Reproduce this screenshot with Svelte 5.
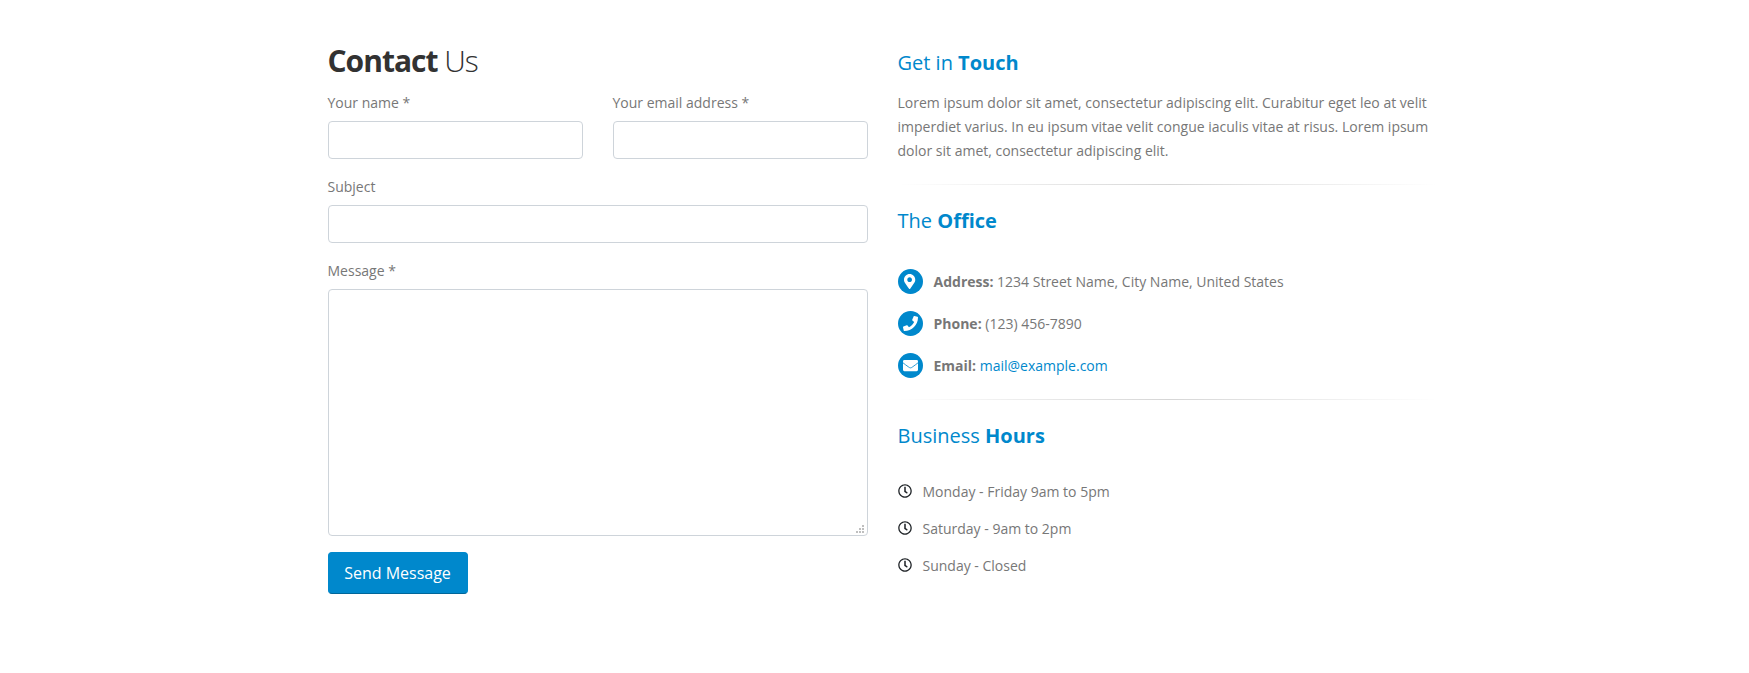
<script>
  const contacts = [
    { icon: 'pin', label: 'Address:', text: '1234 Street Name, City Name, United States' },
    { icon: 'phone', label: 'Phone:', text: '(123) 456-7890' },
    { icon: 'mail', label: 'Email:', text: 'mail@example.com', href: 'mailto:mail@example.com' }
  ];
  const icons = {
    pin: { box: '0 0 384 512', d: 'M172.268 501.67C26.97 291.031 0 269.413 0 192 0 85.961 85.961 0 192 0s192 85.961 192 192c0 77.413-26.97 99.031-172.268 309.67-9.535 13.774-29.93 13.773-39.464 0zM192 272c44.183 0 80-35.817 80-80s-35.817-80-80-80-80 35.817-80 80 35.817 80 80 80z' },
    phone: { box: '0 0 512 512', d: 'M493.4 24.6l-104-24c-11.3-2.6-22.9 3.3-27.5 13.9l-48 112c-4.2 9.8-1.4 21.3 6.9 28l60.6 49.6c-36 76.7-98.9 140.5-177.2 177.2l-49.6-60.6c-6.8-8.3-18.2-11.1-28-6.9l-112 48C3.9 366.5-2 378.1.6 389.4l24 104C27.1 504.2 36.7 512 48 512c256.1 0 464-207.5 464-464 0-11.2-7.7-20.9-18.6-23.4z' },
    mail: { box: '0 0 512 512', d: 'M48 64H464Q512 64 512 112V400Q512 448 464 448H48Q0 448 0 400V112Q0 64 48 64z', flap: 'M0 164C50 208 110 248 178 298C215 327 235 337 256 337S297 327 334 298C402 248 462 208 512 164' }
  };
  const hours = ['Monday - Friday 9am to 5pm', 'Saturday - 9am to 2pm', 'Sunday - Closed'];
</script>

<main class="page">
  <form class="form">
    <h2><strong>Contact</strong> Us</h2>
    <div class="row">
      <label><span>Your name *</span><input type="text" /></label>
      <label><span>Your email address *</span><input type="email" /></label>
    </div>
    <label><span>Subject</span><input type="text" /></label>
    <label class="message">
      <span>Message *</span>
      <span class="area">
        <textarea></textarea>
        <svg class="grip" width="8" height="8" viewBox="0 0 8 8" fill="#bfbfbf" shape-rendering="crispEdges">
          <path d="M6 0h2v2H6zM3 3h2v2H3zM6 3h2v2H6zM0 6h2v2H0zM3 6h2v2H3zM6 6h2v2H6z" />
        </svg>
      </span>
    </label>
    <button type="button">Send Message</button>
  </form>

  <section class="info">
    <h4>Get in <strong>Touch</strong></h4>
    <p>Lorem ipsum dolor sit amet, consectetur adipiscing elit. Curabitur eget leo at velit imperdiet varius. In eu ipsum vitae velit congue iaculis vitae at risus. Lorem ipsum dolor sit amet, consectetur adipiscing elit.</p>
    <hr />
    <h4>The <strong>Office</strong></h4>
    <ul class="contacts">
      {#each contacts as c}
        <li>
          <i class="disc">
            <svg viewBox={icons[c.icon].box} fill="#fff">
              <path d={icons[c.icon].d} />
              {#if icons[c.icon].flap}<path d={icons[c.icon].flap} fill="none" stroke="#08c" stroke-width="28" />{/if}
            </svg>
          </i>
          <span><strong>{c.label}</strong> {#if c.href}<a href={c.href}>{c.text}</a>{:else}{c.text}{/if}</span>
        </li>
      {/each}
    </ul>
    <hr />
    <h4>Business <strong>Hours</strong></h4>
    <ul class="hours">
      {#each hours as h}
        <li>
          <svg class="clock" viewBox="0 0 512 512" fill="#212529"><path d="M256 8C119 8 8 119 8 256s111 248 248 248 248-111 248-248S393 8 256 8zm0 448c-110.500 0-200-89.500-200-200S145.500 56 256 56s200 89.500 200 200-89.500 200-200 200zm61.800-104.400l-84.900-61.700c-3.100-2.300-4.900-5.900-4.900-9.700V116c0-6.600 5.400-12 12-12h32c6.600 0 12 5.400 12 12v141.700l66.800 48.600c5.400 3.900 6.500 11.400 2.600 16.800L334.600 349c-3.900 5.300-11.400 6.500-16.800 2.600z" /></svg>
          <span>{h}</span>
        </li>
      {/each}
    </ul>
  </section>
</main>

<style>
  :global(body) { margin: 0; background: #fff; }
  .page {
    box-sizing: border-box;
    display: flex;
    gap: 30px;
    height: 673px;
    padding: 40px 0 0 327.5px;
    color: #777;
    font: 14px/24px 'Open Sans', sans-serif;
  }
  .form, .info { width: 540px; }
  h2 {
    margin: 0 0 9px;
    color: #323232;
    font-size: 30px;
    font-weight: 300;
    line-height: 42px;
    letter-spacing: -1px;
  }
  h2 strong { font-weight: 700; }
  .row { display: flex; gap: 30px; }
  .row label { flex: 1; }
  label { display: block; margin-bottom: 16px; }
  label > span { display: block; }
  input, textarea {
    display: block;
    box-sizing: border-box;
    width: 100%;
    height: 38px;
    margin: 6px 0 0;
    padding: 6px 12px;
    border: 1px solid #ced4da;
    border-radius: 4px;
    background: #fff;
    outline: none;
    font: inherit;
  }
  textarea { height: 247px; resize: none; }
  .area { position: relative; }
  .grip { position: absolute; right: 4px; bottom: 3px; }
  button {
    display: block;
    width: 140px;
    height: 42px;
    padding: 0;
    border: 1px solid #08c;
    border-color: #08c #08c #006699;
    border-radius: 4px;
    background: #08c;
    color: #fff;
    font: 16px/24px 'Open Sans', sans-serif;
  }
  h4 {
    margin: 0;
    color: #08c;
    font-size: 20px;
    font-weight: 400;
    line-height: 27px;
  }
  .info { padding-top: 9px; }
  strong { font-weight: 700; }
  p { margin: 15px 0 21px; }
  hr {
    height: 1px;
    margin: 0 0 22px;
    border: 0;
    background: linear-gradient(to right, transparent, rgba(0, 0, 0, 0.16), transparent);
  }
  ul { margin: 0; padding: 0; list-style: none; }
  li { display: flex; }
  .contacts { padding: 35px 0 21px; display: grid; gap: 17px; }
  .contacts li { height: 25px; gap: 11px; }
  .contacts span { padding-top: 1px; }
  .disc {
    display: flex;
    align-items: center;
    justify-content: center;
    width: 25px;
    height: 25px;
    border-radius: 50%;
    background: #08c;
  }
  .disc svg { height: 15px; }
  a { color: #08c; text-decoration: none; }
  .hours { padding-top: 31px; display: grid; gap: 13px; }
  .hours li { gap: 11px; }
  .clock { width: 14px; height: 14px; margin-top: 4px; }
</style>
